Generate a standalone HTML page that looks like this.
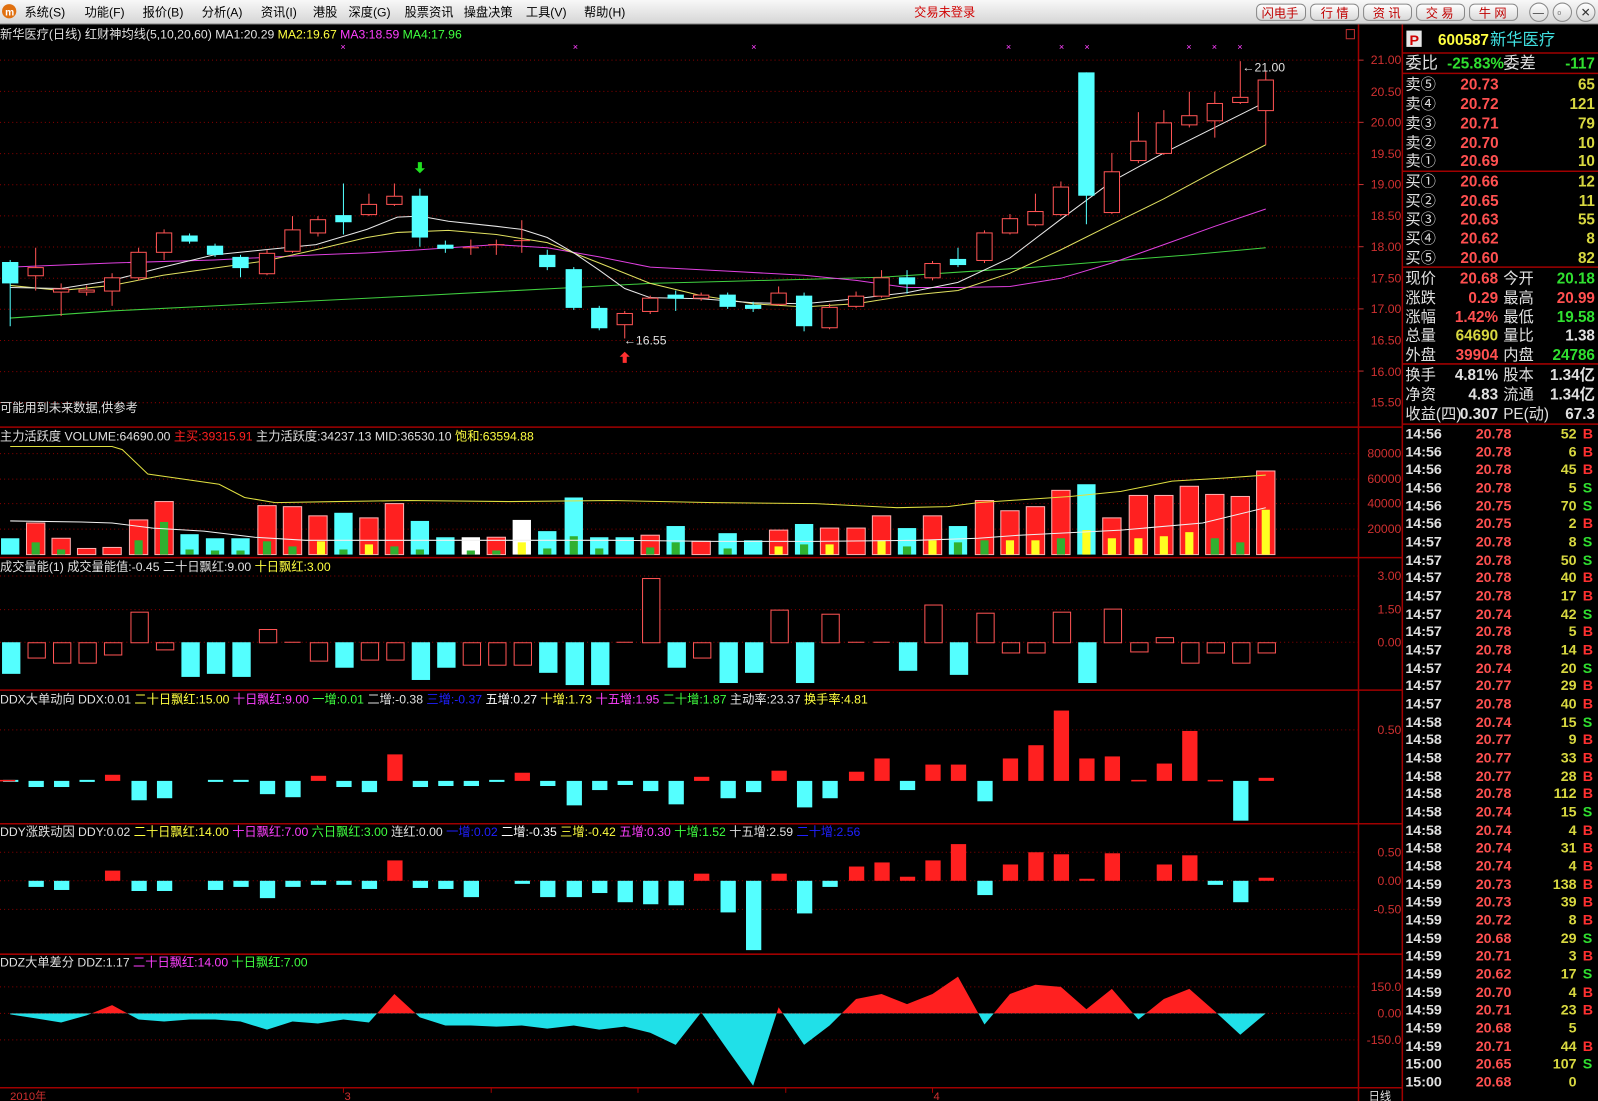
<!DOCTYPE html>
<html><head><meta charset="utf-8"><style>
html,body{margin:0;padding:0;background:#000;overflow:hidden}
svg{display:block}
text{font-family:"Liberation Sans","Noto Sans CJK SC","WenQuanYi Zen Hei",sans-serif}
.r{fill:#000;stroke:#ff5454;stroke-width:1}
.c{fill:#54ffff;stroke:none}
.rf{fill:#ff2020}
.wr{stroke:#ff5454;stroke-width:1}
.wc{stroke:#54ffff;stroke-width:1}
.g{stroke:#8a0000;stroke-width:1;stroke-dasharray:1 3}
.ax{fill:#d03030;font-size:12px}
.sep{stroke:#a00000;stroke-width:1.5}
.t{font-size:12px}
.rp{font-size:15px}
.lab{fill:#e0e0e0}
.pr{fill:#ff5050;font-weight:bold}
.vo{fill:#d8d840;font-weight:bold}
.gr{fill:#30e030;font-weight:bold}
.wh{fill:#e0e0e0;font-weight:bold}
.mn{font-size:12px;fill:#000}
.bt{font-size:12px;fill:#c00000}
</style></head><body>
<svg width="1598" height="1101" viewBox="0 0 1568 1080" preserveAspectRatio="none" xmlns="http://www.w3.org/2000/svg">
<defs>
<linearGradient id="tb" x1="0" y1="0" x2="0" y2="1"><stop offset="0" stop-color="#f8f8f8"/><stop offset="1" stop-color="#d4d4d4"/></linearGradient>
<linearGradient id="bn" x1="0" y1="0" x2="0" y2="1"><stop offset="0" stop-color="#ffffff"/><stop offset="1" stop-color="#d8d8d8"/></linearGradient>
<clipPath id="up"><rect x="0" y="900" width="1333" height="94"/></clipPath>
<clipPath id="dn"><rect x="0" y="994" width="1333" height="80"/></clipPath>
</defs>
<rect width="1568" height="1080" fill="#000"/>
<!-- title bar -->
<rect x="0" y="0" width="1568" height="24" fill="url(#tb)"/>
<line x1="0" y1="23.5" x2="1568" y2="23.5" stroke="#808080"/>
<circle cx="9" cy="11" r="7" fill="#e07010"/><text x="5" y="15" font-size="10" fill="#fff" font-weight="bold">m</text>
<text class="mn" x="24" y="16">系统(S)</text>
<text class="mn" x="83" y="16">功能(F)</text>
<text class="mn" x="140" y="16">报价(B)</text>
<text class="mn" x="198" y="16">分析(A)</text>
<text class="mn" x="256" y="16">资讯(I)</text>
<text class="mn" x="307" y="16">港股</text>
<text class="mn" x="342" y="16">深度(G)</text>
<text class="mn" x="397" y="16">股票资讯</text>
<text class="mn" x="455" y="16">操盘决策</text>
<text class="mn" x="516" y="16">工具(V)</text>
<text class="mn" x="573" y="16">帮助(H)</text>
<text x="897" y="16" font-size="12" fill="#d00000">交易未登录</text>
<g stroke="#888" fill="url(#bn)">
<rect x="1233" y="4" width="48" height="16" rx="5"/><rect x="1286" y="4" width="47" height="16" rx="5"/><rect x="1338" y="4" width="47" height="16" rx="5"/><rect x="1390" y="4" width="47" height="16" rx="5"/><rect x="1442" y="4" width="47" height="16" rx="5"/>
<circle cx="1510" cy="12" r="9"/><circle cx="1533" cy="12" r="9"/><circle cx="1556" cy="12" r="9"/>
</g>
<text class="bt" x="1238" y="17">闪电手</text><text class="bt" x="1296" y="17">行 情</text><text class="bt" x="1347" y="17">资 讯</text><text class="bt" x="1399" y="17">交 易</text><text class="bt" x="1451" y="17">牛 网</text>
<text x="1504" y="16" font-size="11" fill="#333">—</text><text x="1528" y="16" font-size="11" fill="#333">▫</text><text x="1551" y="16" font-size="12" fill="#333">✕</text>

<!-- grid lines -->
<g class="g">
<line x1="0" x2="1333" y1="59" y2="59"/><line x1="0" x2="1333" y1="89.6" y2="89.6"/><line x1="0" x2="1333" y1="120" y2="120"/><line x1="0" x2="1333" y1="150.7" y2="150.7"/><line x1="0" x2="1333" y1="181.2" y2="181.2"/><line x1="0" x2="1333" y1="211.8" y2="211.8"/><line x1="0" x2="1333" y1="242.3" y2="242.3"/><line x1="0" x2="1333" y1="272.9" y2="272.9"/><line x1="0" x2="1333" y1="303.4" y2="303.4"/><line x1="0" x2="1333" y1="334" y2="334"/><line x1="0" x2="1333" y1="364.5" y2="364.5"/><line x1="0" x2="1333" y1="395" y2="395"/>
<line x1="0" x2="1333" y1="445" y2="445"/><line x1="0" x2="1333" y1="470" y2="470"/><line x1="0" x2="1333" y1="494" y2="494"/><line x1="0" x2="1333" y1="519" y2="519"/>
<line x1="0" x2="1333" y1="565" y2="565"/><line x1="0" x2="1333" y1="598" y2="598"/><line x1="0" x2="1333" y1="630" y2="630"/>
<line x1="0" x2="1333" y1="716" y2="716"/>
<line x1="0" x2="1333" y1="836" y2="836"/><line x1="0" x2="1333" y1="864" y2="864"/><line x1="0" x2="1333" y1="892" y2="892"/>
<line x1="0" x2="1333" y1="968" y2="968"/><line x1="0" x2="1333" y1="994" y2="994"/><line x1="0" x2="1333" y1="1020" y2="1020"/>
</g>
<!-- separators -->
<g class="sep">
<line x1="0" x2="1376" y1="419" y2="419"/><line x1="0" x2="1376" y1="547" y2="547"/><line x1="0" x2="1376" y1="677" y2="677"/><line x1="0" x2="1376" y1="808" y2="808"/><line x1="0" x2="1376" y1="936" y2="936"/><line x1="0" x2="1376" y1="1067" y2="1067"/>
<line x1="1333" x2="1333" y1="24" y2="1080"/><line x1="1376" x2="1376" y1="24" y2="1080"/>
</g>
<rect x="1321" y="29" width="8" height="9" fill="none" stroke="#c03030"/>
<!-- axis labels -->
<g class="ax" text-anchor="end">
<text x="1375" y="63">21.00</text><text x="1375" y="94">20.50</text><text x="1375" y="124">20.00</text><text x="1375" y="155">19.50</text><text x="1375" y="185">19.00</text><text x="1375" y="216">18.50</text><text x="1375" y="246">18.00</text><text x="1375" y="277">17.50</text><text x="1375" y="307">17.00</text><text x="1375" y="338">16.50</text><text x="1375" y="369">16.00</text><text x="1375" y="399">15.50</text>
<text x="1375" y="449">80000</text><text x="1375" y="474">60000</text><text x="1375" y="498">40000</text><text x="1375" y="523">20000</text>
<text x="1375" y="569">3.00</text><text x="1375" y="602">1.50</text><text x="1375" y="634">0.00</text>
<text x="1375" y="720">0.50</text>
<text x="1375" y="840">0.50</text><text x="1375" y="868">0.00</text><text x="1375" y="896">-0.50</text>
<text x="1375" y="972">150.0</text><text x="1375" y="998">0.00</text><text x="1375" y="1024">-150.0</text>
</g>
<g stroke="#c03030"><line x1="1333" x2="1338" y1="59" y2="59"/><line x1="1333" x2="1338" y1="120" y2="120"/><line x1="1333" x2="1338" y1="181" y2="181"/><line x1="1333" x2="1338" y1="242" y2="242"/><line x1="1333" x2="1338" y1="303" y2="303"/><line x1="1333" x2="1338" y1="364" y2="364"/></g>

<!-- main legend -->
<text class="t" x="0" y="38"><tspan fill="#e0e0e0">新华医疗(日线) 红财神均线(5,10,20,60) MA1:20.29 </tspan><tspan fill="#ffff40">MA2:19.67 </tspan><tspan fill="#ff40ff">MA3:18.59 </tspan><tspan fill="#40ff40">MA4:17.96</tspan></text>
<g fill="#ff40ff" font-size="9"><text x="334" y="49">×</text><text x="562" y="49">×</text><text x="737" y="49">×</text><text x="987" y="49">×</text><text x="1039" y="49">×</text><text x="1064" y="49">×</text><text x="1164" y="49">×</text><text x="1189" y="49">×</text><text x="1214" y="49">×</text></g>
<text class="t" x="0" y="404" fill="#e0e0e0">可能用到未来数据,供参考</text>

<!-- MAs -->
<polyline fill="none" stroke="#40d040" points="10,312 110,305 210,300 310,295 412,290 487,286 563,282 638,278 714,276 789,274 865,272 940,267 1016,262 1091,256 1167,250 1242,243"/>
<polyline fill="none" stroke="#e040e0" points="10,262 110,258 210,255 310,250 360,248 412,245 487,240 537,243 588,252 638,262 714,266 789,270 840,275 890,282 940,282 991,281 1041,273 1091,258 1142,240 1192,222 1242,205"/>
<polyline fill="none" stroke="#e0e060" points="10,280 60,285 110,280 160,270 210,263 260,256 310,245 360,233 390,228 440,226 487,230 537,238 588,258 638,278 688,290 739,298 789,301 840,298 890,290 940,285 991,268 1041,245 1091,220 1142,195 1192,168 1242,142"/>
<polyline fill="none" stroke="#e8e8e8" points="10,282 60,283 110,275 160,262 210,250 260,245 310,240 360,225 390,213 412,212 440,217 487,222 512,225 537,233 563,248 588,265 613,283 638,292 688,293 739,297 789,298 840,293 890,287 940,277 991,253 1041,215 1091,178 1142,150 1192,125 1242,100"/>

<!-- candles -->
<line class="wc" x1="10" x2="10" y1="255" y2="320"/><rect class="c" x="2" y="257" width="16" height="21"/>
<line class="wr" x1="35" x2="35" y1="243" y2="285"/><rect class="r" x="27.5" y="262.5" width="15" height="8"/>
<line class="wr" x1="60" x2="60" y1="278" y2="310"/><rect class="r" x="52.5" y="283.5" width="15" height="3"/>
<line class="wr" x1="85" x2="85" y1="280" y2="290"/><rect class="r" x="77.5" y="284.5" width="15" height="2"/>
<line class="wr" x1="110" x2="110" y1="268" y2="300"/><rect class="r" x="102.5" y="272.5" width="15" height="13"/>
<line class="wr" x1="136" x2="136" y1="243" y2="275"/><rect class="r" x="128.5" y="247.5" width="15" height="25"/>
<line class="wr" x1="161" x2="161" y1="225" y2="255"/><rect class="r" x="153.5" y="228.5" width="15" height="19"/>
<line class="wc" x1="186" x2="186" y1="229" y2="239"/><rect class="c" x="178" y="231" width="16" height="6"/>
<line class="wc" x1="211" x2="211" y1="239" y2="252"/><rect class="c" x="203" y="241" width="16" height="9"/>
<line class="wc" x1="236" x2="236" y1="250" y2="272"/><rect class="c" x="228" y="252" width="16" height="11"/>
<line class="wr" x1="262" x2="262" y1="245" y2="270"/><rect class="r" x="254.5" y="248.5" width="15" height="20"/>
<line class="wr" x1="287" x2="287" y1="212" y2="248"/><rect class="r" x="279.5" y="225.5" width="15" height="21"/>
<line class="wr" x1="312" x2="312" y1="212" y2="232"/><rect class="r" x="304.5" y="215.5" width="15" height="13"/>
<line class="wc" x1="337" x2="337" y1="180" y2="230"/><rect class="c" x="329" y="211" width="16" height="7"/>
<line class="wr" x1="362" x2="362" y1="190" y2="212"/><rect class="r" x="354.5" y="200.5" width="15" height="10"/>
<line class="wr" x1="387" x2="387" y1="180" y2="202"/><rect class="r" x="379.5" y="192.5" width="15" height="8"/>
<line class="wc" x1="412" x2="412" y1="185" y2="242"/><rect class="c" x="404" y="192" width="16" height="41"/>
<line class="wc" x1="437" x2="437" y1="236" y2="248"/><rect class="c" x="429" y="240" width="16" height="4"/>
<line class="wr" x1="462" x2="462" y1="235" y2="250"/><line class="wr" x1="454" x2="470" y1="243" y2="243"/>
<line class="wr" x1="487" x2="487" y1="235" y2="250"/><line class="wr" x1="479" x2="495" y1="240" y2="240"/>
<line class="wr" x1="512" x2="512" y1="216" y2="248"/><line class="wr" x1="504" x2="520" y1="236" y2="236"/>
<line class="wc" x1="537" x2="537" y1="245" y2="265"/><rect class="c" x="529" y="250" width="16" height="12"/>
<line class="wc" x1="563" x2="563" y1="262" y2="304"/><rect class="c" x="555" y="264" width="16" height="38"/>
<line class="wc" x1="588" x2="588" y1="300" y2="324"/><rect class="c" x="580" y="302" width="16" height="20"/>
<line class="wr" x1="613" x2="613" y1="305" y2="332"/><rect class="r" x="605.5" y="307.5" width="15" height="11"/>
<line class="wr" x1="638" x2="638" y1="290" y2="308"/><rect class="r" x="630.5" y="292.5" width="15" height="13"/>
<line class="wc" x1="663" x2="663" y1="285" y2="305"/><rect class="c" x="655" y="289" width="16" height="4"/>
<line class="wr" x1="688" x2="688" y1="287" y2="295"/><rect class="r" x="680.5" y="289.5" width="15" height="3"/>
<line class="wc" x1="714" x2="714" y1="287" y2="303"/><rect class="c" x="706" y="289" width="16" height="12"/>
<line class="wc" x1="739" x2="739" y1="296" y2="306"/><rect class="c" x="731" y="299" width="16" height="4"/>
<line class="wr" x1="764" x2="764" y1="281" y2="300"/><rect class="r" x="756.5" y="287.5" width="15" height="11"/>
<line class="wc" x1="789" x2="789" y1="287" y2="325"/><rect class="c" x="781" y="290" width="16" height="30"/>
<line class="wr" x1="814" x2="814" y1="298" y2="323"/><rect class="r" x="806.5" y="301.5" width="15" height="20"/>
<line class="wr" x1="840" x2="840" y1="286" y2="302"/><rect class="r" x="832.5" y="290.5" width="15" height="10"/>
<line class="wr" x1="865" x2="865" y1="265" y2="292"/><rect class="r" x="857.5" y="272.5" width="15" height="18"/>
<line class="wc" x1="890" x2="890" y1="265" y2="288"/><rect class="c" x="882" y="272" width="16" height="7"/>
<line class="wr" x1="915" x2="915" y1="256" y2="275"/><rect class="r" x="907.5" y="258.5" width="15" height="14"/>
<line class="wc" x1="940" x2="940" y1="243" y2="262"/><rect class="c" x="932" y="254" width="16" height="6"/>
<line class="wr" x1="966" x2="966" y1="226" y2="258"/><rect class="r" x="958.5" y="228.5" width="15" height="27"/>
<line class="wr" x1="991" x2="991" y1="210" y2="230"/><rect class="r" x="983.5" y="214.5" width="15" height="14"/>
<line class="wr" x1="1016" x2="1016" y1="190" y2="222"/><rect class="r" x="1008.5" y="207.5" width="15" height="13"/>
<line class="wr" x1="1041" x2="1041" y1="178" y2="212"/><rect class="r" x="1033.5" y="183.5" width="15" height="27"/>
<line class="wc" x1="1066" x2="1066" y1="71" y2="220"/><rect class="c" x="1058" y="71" width="16" height="121"/>
<line class="wr" x1="1091" x2="1091" y1="150" y2="210"/><rect class="r" x="1083.5" y="168.5" width="15" height="40"/>
<line class="wr" x1="1117" x2="1117" y1="110" y2="160"/><rect class="r" x="1109.5" y="138.5" width="15" height="19"/>
<line class="wr" x1="1142" x2="1142" y1="108" y2="152"/><rect class="r" x="1134.5" y="120.5" width="15" height="30"/>
<line class="wr" x1="1167" x2="1167" y1="90" y2="125"/><rect class="r" x="1159.5" y="113.5" width="15" height="9"/>
<line class="wr" x1="1192" x2="1192" y1="90" y2="135"/><rect class="r" x="1184.5" y="101.5" width="15" height="17"/>
<line class="wr" x1="1217" x2="1217" y1="60" y2="102"/><rect class="r" x="1209.5" y="95.5" width="15" height="5"/>
<line class="wr" x1="1242" x2="1242" y1="70" y2="142"/><rect class="r" x="1234.5" y="78.5" width="15" height="30"/>
<text x="1219" y="70" font-size="12" fill="#e0e0e0">←21.00</text>
<text x="612" y="338" font-size="12" fill="#e0e0e0">←16.55</text>
<path d="M412 170 l-5 -5 h3 v-6 h4 v6 h3 z" fill="#20e020"/>
<path d="M613 345 l-5 5 h3 v6 h4 v-6 h3 z" fill="#ff3030"/>

<!-- volume panel -->
<text class="t" x="0" y="432"><tspan fill="#e0e0e0">主力活跃度 VOLUME:64690.00 </tspan><tspan fill="#ff2020"> 主买:39315.91 </tspan><tspan fill="#e0e0e0">  主力活跃度:34237.13    MID:36530.10 </tspan><tspan fill="#ffff40">饱和:63594.88</tspan></text>
<g>
<rect x="1" y="528" width="18" height="16" fill="#54ffff"/>
<rect x="26" y="513" width="18" height="31" fill="#ff2020" stroke="#ffb0b0"/>
<rect x="51" y="528" width="18" height="16" fill="#ff2020" stroke="#ffb0b0"/>
<rect x="76" y="538" width="18" height="6" fill="#ff2020" stroke="#ffb0b0"/>
<rect x="101" y="537" width="18" height="7" fill="#ff2020" stroke="#ffb0b0"/>
<rect x="127" y="510" width="18" height="34" fill="#ff2020" stroke="#ffb0b0"/>
<rect x="152" y="492" width="18" height="52" fill="#ff2020" stroke="#ffb0b0"/>
<rect x="177" y="524" width="18" height="20" fill="#54ffff"/>
<rect x="202" y="528" width="18" height="16" fill="#54ffff"/>
<rect x="227" y="528" width="18" height="16" fill="#54ffff"/>
<rect x="253" y="496" width="18" height="48" fill="#ff2020" stroke="#ffb0b0"/>
<rect x="278" y="497" width="18" height="47" fill="#ff2020" stroke="#ffb0b0"/>
<rect x="303" y="506" width="18" height="38" fill="#ff2020" stroke="#ffb0b0"/>
<rect x="328" y="503" width="18" height="41" fill="#54ffff"/>
<rect x="353" y="508" width="18" height="36" fill="#ff2020" stroke="#ffb0b0"/>
<rect x="378" y="494" width="18" height="50" fill="#ff2020" stroke="#ffb0b0"/>
<rect x="403" y="511" width="18" height="33" fill="#54ffff"/>
<rect x="428" y="527" width="18" height="17" fill="#54ffff"/>
<rect x="453" y="527" width="18" height="17" fill="#ffffff"/>
<rect x="478" y="527" width="18" height="17" fill="#ff2020" stroke="#ffb0b0"/>
<rect x="503" y="510" width="18" height="34" fill="#ffffff"/>
<rect x="528" y="521" width="18" height="23" fill="#54ffff"/>
<rect x="554" y="488" width="18" height="56" fill="#54ffff"/>
<rect x="579" y="527" width="18" height="17" fill="#54ffff"/>
<rect x="604" y="527" width="18" height="17" fill="#54ffff"/>
<rect x="629" y="525" width="18" height="19" fill="#ff2020" stroke="#ffb0b0"/>
<rect x="654" y="516" width="18" height="28" fill="#54ffff"/>
<rect x="679" y="531" width="18" height="13" fill="#ff2020" stroke="#ffb0b0"/>
<rect x="705" y="523" width="18" height="21" fill="#54ffff"/>
<rect x="730" y="530" width="18" height="14" fill="#54ffff"/>
<rect x="755" y="520" width="18" height="24" fill="#ff2020" stroke="#ffb0b0"/>
<rect x="780" y="514" width="18" height="30" fill="#54ffff"/>
<rect x="805" y="518" width="18" height="26" fill="#ff2020" stroke="#ffb0b0"/>
<rect x="831" y="518" width="18" height="26" fill="#ff2020" stroke="#ffb0b0"/>
<rect x="856" y="506" width="18" height="38" fill="#ff2020" stroke="#ffb0b0"/>
<rect x="881" y="518" width="18" height="26" fill="#54ffff"/>
<rect x="906" y="506" width="18" height="38" fill="#ff2020" stroke="#ffb0b0"/>
<rect x="931" y="516" width="18" height="28" fill="#54ffff"/>
<rect x="957" y="491" width="18" height="53" fill="#ff2020" stroke="#ffb0b0"/>
<rect x="982" y="501" width="18" height="43" fill="#ff2020" stroke="#ffb0b0"/>
<rect x="1007" y="497" width="18" height="47" fill="#ff2020" stroke="#ffb0b0"/>
<rect x="1032" y="481" width="18" height="63" fill="#ff2020" stroke="#ffb0b0"/>
<rect x="1057" y="475" width="18" height="69" fill="#54ffff"/>
<rect x="1082" y="508" width="18" height="36" fill="#ff2020" stroke="#ffb0b0"/>
<rect x="1108" y="486" width="18" height="58" fill="#ff2020" stroke="#ffb0b0"/>
<rect x="1133" y="486" width="18" height="58" fill="#ff2020" stroke="#ffb0b0"/>
<rect x="1158" y="477" width="18" height="67" fill="#ff2020" stroke="#ffb0b0"/>
<rect x="1183" y="485" width="18" height="59" fill="#ff2020" stroke="#ffb0b0"/>
<rect x="1208" y="487" width="18" height="57" fill="#ff2020" stroke="#ffb0b0"/>
<rect x="1233" y="462" width="18" height="82" fill="#ff2020" stroke="#ffb0b0"/>
</g>
<g fill="#30b030">
<rect x="31" y="532" width="8" height="12"/><rect x="56" y="539" width="8" height="5"/><rect x="132" y="530" width="8" height="14"/><rect x="157" y="512" width="8" height="32"/><rect x="182" y="539" width="8" height="5"/><rect x="207" y="540" width="8" height="4"/><rect x="232" y="540" width="8" height="4"/><rect x="258" y="531" width="8" height="13"/><rect x="283" y="536" width="8" height="8"/><rect x="333" y="539" width="8" height="5"/><rect x="383" y="536" width="8" height="8"/><rect x="408" y="539" width="8" height="5"/><rect x="458" y="540" width="8" height="4"/><rect x="483" y="540" width="8" height="4"/><rect x="533" y="538" width="8" height="6"/><rect x="559" y="526" width="8" height="18"/><rect x="584" y="538" width="8" height="6"/><rect x="634" y="537" width="8" height="7"/><rect x="659" y="532" width="8" height="12"/><rect x="710" y="538" width="8" height="6"/><rect x="785" y="534" width="8" height="10"/><rect x="886" y="536" width="8" height="8"/><rect x="936" y="532" width="8" height="12"/><rect x="962" y="530" width="8" height="14"/><rect x="1188" y="528" width="8" height="16"/><rect x="1213" y="532" width="8" height="12"/><rect x="1037" y="528" width="8" height="16"/>
</g>
<g fill="#ffff20">
<rect x="508" y="532" width="8" height="12"/><rect x="311" y="531" width="8" height="13"/><rect x="358" y="534" width="8" height="10"/><rect x="760" y="536" width="8" height="8"/><rect x="810" y="534" width="8" height="10"/><rect x="861" y="530" width="8" height="14"/><rect x="911" y="530" width="8" height="14"/><rect x="987" y="530" width="8" height="14"/><rect x="1012" y="530" width="8" height="14"/><rect x="1062" y="520" width="8" height="24"/><rect x="1087" y="528" width="8" height="16"/><rect x="1113" y="528" width="8" height="16"/><rect x="1138" y="526" width="8" height="18"/><rect x="1163" y="522" width="8" height="22"/><rect x="1238" y="500" width="8" height="44"/>
</g>
<polyline fill="none" stroke="#e0e040" points="10,438 110,438 120,441 145,465 215,475 240,488 270,493 330,492 400,491 500,492 600,491 700,493 800,494 880,498 930,497 960,493 1050,487 1100,482 1150,472 1200,469 1242,466"/>
<polyline fill="none" stroke="#f0f0f0" points="10,511 80,512 110,513 150,518 200,521 250,527 300,530 400,530 500,530 600,530 700,531 800,531 900,530 960,528 1000,525 1100,520 1180,513 1242,498"/>

<!-- panel 3 -->
<text class="t" x="0" y="560"><tspan fill="#e0e0e0">成交量能(1) 成交量能值:-0.45 二十日飘红:9.00 </tspan><tspan fill="#ffff40">十日飘红:3.00</tspan></text>
<g class="c">
<rect x="2" y="630" width="18" height="31"/><rect x="178" y="630" width="18" height="34"/><rect x="203" y="630" width="18" height="31"/><rect x="228" y="630" width="18" height="34"/><rect x="329" y="630" width="18" height="25"/><rect x="404" y="630" width="18" height="37"/><rect x="429" y="630" width="18" height="25"/><rect x="529" y="630" width="18" height="30"/><rect x="555" y="630" width="18" height="42"/><rect x="580" y="630" width="18" height="42"/><rect x="655" y="630" width="18" height="25"/><rect x="706" y="630" width="18" height="40"/><rect x="731" y="630" width="18" height="30"/><rect x="781" y="630" width="18" height="40"/><rect x="882" y="630" width="18" height="28"/><rect x="932" y="630" width="18" height="32"/><rect x="1058" y="630" width="18" height="40"/>
</g>
<g class="r">
<rect x="27.5" y="630.5" width="17" height="15"/><rect x="52.5" y="630.5" width="17" height="20"/><rect x="77.5" y="630.5" width="17" height="20"/><rect x="102.5" y="630.5" width="17" height="12"/><rect x="128.5" y="600.5" width="17" height="30"/><rect x="153.5" y="630.5" width="17" height="7"/><rect x="254.5" y="617.5" width="17" height="13"/><rect x="304.5" y="630.5" width="17" height="18"/><rect x="354.5" y="630.5" width="17" height="17"/><rect x="379.5" y="630.5" width="17" height="17"/><rect x="454.5" y="630.5" width="17" height="22"/><rect x="479.5" y="630.5" width="17" height="22"/><rect x="504.5" y="630.5" width="17" height="22"/><rect x="630.5" y="567.5" width="17" height="63"/><rect x="680.5" y="630.5" width="17" height="15"/><rect x="756.5" y="598.5" width="17" height="32"/><rect x="806.5" y="602.5" width="17" height="28"/><rect x="907.5" y="593.5" width="17" height="37"/><rect x="958.5" y="601.5" width="17" height="29"/><rect x="983.5" y="630.5" width="17" height="10"/><rect x="1008.5" y="630.5" width="17" height="10"/><rect x="1033.5" y="600.5" width="17" height="30"/><rect x="1083.5" y="597.5" width="17" height="33"/><rect x="1109.5" y="630.5" width="17" height="9"/><rect x="1134.5" y="625.5" width="17" height="5"/><rect x="1159.5" y="630.5" width="17" height="20"/><rect x="1184.5" y="630.5" width="17" height="10"/><rect x="1209.5" y="630.5" width="17" height="20"/><rect x="1234.5" y="630.5" width="17" height="10"/>
</g>
<g stroke="#ff5454"><line x1="279" x2="295" y1="630" y2="630"/><line x1="605" x2="621" y1="630" y2="630"/><line x1="832" x2="848" y1="630" y2="630"/><line x1="857" x2="873" y1="630" y2="630"/></g>

<!-- DDX -->
<text class="t" x="0" y="690"><tspan fill="#e0e0e0">DDX大单动向 DDX:0.01    </tspan><tspan fill="#ffff40">二十日飘红:15.00 </tspan><tspan fill="#ff40ff">十日飘红:9.00 </tspan><tspan fill="#40ff40">一增:0.01 </tspan><tspan fill="#e0e0e0">二增:-0.38 </tspan><tspan fill="#2020ff">三增:-0.37 </tspan><tspan fill="#ffffff">五增:0.27 </tspan><tspan fill="#ffff40">十增:1.73 </tspan><tspan fill="#ff40ff">十五增:1.95 </tspan><tspan fill="#40ff40">二十增:1.87 </tspan><tspan fill="#e0e0e0">主动率:23.37 </tspan><tspan fill="#ffff40">换手率:4.81</tspan></text>
<g class="c">
<rect x="28" y="766" width="15" height="6"/><rect x="53" y="766" width="15" height="6"/><rect x="129" y="766" width="15" height="19"/><rect x="154" y="766" width="15" height="17"/><rect x="255" y="766" width="15" height="13"/><rect x="280" y="766" width="15" height="16"/><rect x="330" y="766" width="15" height="6"/><rect x="355" y="766" width="15" height="11"/><rect x="405" y="766" width="15" height="6"/><rect x="430" y="766" width="15" height="5"/><rect x="455" y="766" width="15" height="5"/><rect x="530" y="766" width="15" height="5"/><rect x="556" y="766" width="15" height="24"/><rect x="581" y="766" width="15" height="9"/><rect x="606" y="766" width="15" height="4"/><rect x="631" y="766" width="15" height="10"/><rect x="656" y="766" width="15" height="23"/><rect x="707" y="766" width="15" height="17"/><rect x="732" y="766" width="15" height="11"/><rect x="782" y="766" width="15" height="26"/><rect x="807" y="766" width="15" height="17"/><rect x="883" y="766" width="15" height="9"/><rect x="959" y="766" width="15" height="20"/><rect x="1210" y="766" width="15" height="39"/>
<rect x="3" y="765" width="15" height="2"/><rect x="78" y="765" width="15" height="2"/><rect x="204" y="765" width="15" height="2"/><rect x="229" y="765" width="15" height="2"/><rect x="480" y="765" width="15" height="2"/>
</g>
<g class="rf">
<rect x="103" y="760" width="15" height="6"/><rect x="305" y="761" width="15" height="5"/><rect x="380" y="740" width="15" height="26"/><rect x="505" y="758" width="15" height="8"/><rect x="681" y="762" width="15" height="4"/><rect x="757" y="756" width="15" height="10"/><rect x="833" y="757" width="15" height="9"/><rect x="858" y="744" width="15" height="22"/><rect x="908" y="750" width="15" height="16"/><rect x="933" y="750" width="15" height="16"/><rect x="984" y="744" width="15" height="22"/><rect x="1009" y="731" width="15" height="35"/><rect x="1034" y="697" width="15" height="69"/><rect x="1059" y="744" width="15" height="22"/><rect x="1084" y="742" width="15" height="24"/><rect x="1135" y="749" width="15" height="17"/><rect x="1160" y="717" width="15" height="49"/><rect x="1235" y="763" width="15" height="3"/>
<rect x="0" y="765" width="15" height="1.5"/><rect x="1110" y="765" width="15" height="1.5"/><rect x="1185" y="765" width="15" height="1.5"/>
</g>

<!-- DDY -->
<text class="t" x="0" y="820"><tspan fill="#e0e0e0">DDY涨跌动因 DDY:0.02    </tspan><tspan fill="#ffff40">二十日飘红:14.00 </tspan><tspan fill="#ff40ff">十日飘红:7.00 </tspan><tspan fill="#40ff40">六日飘红:3.00 </tspan><tspan fill="#e0e0e0">连红:0.00 </tspan><tspan fill="#2020ff">一增:0.02 </tspan><tspan fill="#ffffff">二增:-0.35 </tspan><tspan fill="#ffff40">三增:-0.42 </tspan><tspan fill="#ff40ff">五增:0.30 </tspan><tspan fill="#40ff40">十增:1.52 </tspan><tspan fill="#e0e0e0">十五增:2.59 </tspan><tspan fill="#2020ff">二十增:2.56</tspan></text>
<g class="c">
<rect x="28" y="864" width="15" height="6"/><rect x="53" y="864" width="15" height="9"/><rect x="129" y="864" width="15" height="10"/><rect x="154" y="864" width="15" height="10"/><rect x="204" y="864" width="15" height="9"/><rect x="229" y="864" width="15" height="6"/><rect x="255" y="864" width="15" height="17"/><rect x="280" y="864" width="15" height="6"/><rect x="305" y="864" width="15" height="4"/><rect x="330" y="864" width="15" height="4"/><rect x="355" y="864" width="15" height="8"/><rect x="405" y="864" width="15" height="7"/><rect x="430" y="864" width="15" height="8"/><rect x="455" y="864" width="15" height="16"/><rect x="505" y="864" width="15" height="3"/><rect x="530" y="864" width="15" height="16"/><rect x="556" y="864" width="15" height="16"/><rect x="581" y="864" width="15" height="12"/><rect x="606" y="864" width="15" height="21"/><rect x="631" y="864" width="15" height="23"/><rect x="656" y="864" width="15" height="24"/><rect x="707" y="864" width="15" height="31"/><rect x="732" y="864" width="15" height="68"/><rect x="782" y="864" width="15" height="32"/><rect x="807" y="864" width="15" height="6"/><rect x="959" y="864" width="15" height="14"/><rect x="1185" y="864" width="15" height="4"/><rect x="1210" y="864" width="15" height="21"/>
</g>
<g class="rf">
<rect x="103" y="854" width="15" height="10"/><rect x="380" y="844" width="15" height="20"/><rect x="681" y="857" width="15" height="7"/><rect x="757" y="857" width="15" height="7"/><rect x="833" y="850" width="15" height="14"/><rect x="858" y="846" width="15" height="18"/><rect x="883" y="860" width="15" height="4"/><rect x="908" y="844" width="15" height="20"/><rect x="933" y="828" width="15" height="36"/><rect x="984" y="848" width="15" height="16"/><rect x="1009" y="836" width="15" height="28"/><rect x="1034" y="838" width="15" height="26"/><rect x="1059" y="862" width="15" height="2"/><rect x="1084" y="837" width="15" height="27"/><rect x="1135" y="848" width="15" height="16"/><rect x="1160" y="839" width="15" height="25"/><rect x="1235" y="861" width="15" height="3"/>
</g>

<!-- DDZ -->
<text class="t" x="0" y="948"><tspan fill="#e0e0e0">DDZ大单差分 DDZ:1.17   </tspan><tspan fill="#ff40ff">二十日飘红:14.00 </tspan><tspan fill="#40ff40">十日飘红:7.00</tspan></text>
<g>
<polygon clip-path="url(#up)" fill="#ff2020" points="10,994 10,995 35,999 60,1003 85,996 110,986 136,1000 161,1002 186,1000 211,1000 236,1002 262,1010 287,1002 312,1004 337,1000 362,1003 387,975 412,998 437,1006 462,1006 487,1007 512,1006 537,1009 563,1006 588,1010 613,1007 638,1013 663,1025 688,993 714,1030 739,1065 764,988 789,1025 814,1006 840,980 865,975 890,985 915,975 940,958 966,1005 991,975 1016,966 1041,968 1066,990 1091,970 1117,1000 1142,980 1167,970 1192,992 1217,1015 1242,994 1242,994"/>
<polygon clip-path="url(#dn)" fill="#20e0e8" points="10,994 10,995 35,999 60,1003 85,996 110,986 136,1000 161,1002 186,1000 211,1000 236,1002 262,1010 287,1002 312,1004 337,1000 362,1003 387,975 412,998 437,1006 462,1006 487,1007 512,1006 537,1009 563,1006 588,1010 613,1007 638,1013 663,1025 688,993 714,1030 739,1065 764,988 789,1025 814,1006 840,980 865,975 890,985 915,975 940,958 966,1005 991,975 1016,966 1041,968 1066,990 1091,970 1117,1000 1142,980 1167,970 1192,992 1217,1015 1242,994 1242,994"/>
</g>

<!-- bottom axis -->
<text x="10" y="1079" font-size="11" fill="#d03030">2010年</text>
<text x="338" y="1079" font-size="11" fill="#d03030">3</text>
<text x="916" y="1079" font-size="11" fill="#d03030">4</text>
<text x="1343" y="1079" font-size="11" fill="#e0e0e0">日线</text>
<g stroke="#a00000"><line x1="337" x2="337" y1="1067" y2="1072"/><line x1="482" x2="482" y1="1067" y2="1072"/><line x1="626" x2="626" y1="1067" y2="1072"/><line x1="771" x2="771" y1="1067" y2="1072"/><line x1="915" x2="915" y1="1067" y2="1072"/></g>

<!-- right panel -->
<rect x="1380" y="30" width="15" height="16" fill="#e8e8e8"/><text x="1383" y="44" font-size="14" font-weight="bold" fill="#d00000">P</text>
<text x="1411" y="44" font-size="15" font-weight="bold" fill="#ffff40">600587</text>
<text x="1462" y="44" font-size="16" fill="#40e0e0">新华医疗</text>
<g stroke="#a00000" stroke-width="1.5"><line x1="1376" x2="1568" y1="52" y2="52"/><line x1="1376" x2="1568" y1="72" y2="72"/><line x1="1376" x2="1568" y1="168" y2="168"/><line x1="1376" x2="1568" y1="262" y2="262"/><line x1="1376" x2="1568" y1="357" y2="357"/><line x1="1376" x2="1568" y1="416" y2="416"/></g>
<g class="rp">
<text class="lab" x="1379" y="67" font-size="16">委比</text><text class="gr" x="1420" y="67">-25.83%</text><text class="lab" x="1475" y="67" font-size="16">委差</text><text class="gr" x="1565" y="67" text-anchor="end">-117</text>
<text class="lab" x="1379" y="88">卖⑤</text><text class="pr" x="1433" y="88">20.73</text><text class="vo" x="1565" y="88" text-anchor="end">65</text>
<text class="lab" x="1379" y="107">卖④</text><text class="pr" x="1433" y="107">20.72</text><text class="vo" x="1565" y="107" text-anchor="end">121</text>
<text class="lab" x="1379" y="126">卖③</text><text class="pr" x="1433" y="126">20.71</text><text class="vo" x="1565" y="126" text-anchor="end">79</text>
<text class="lab" x="1379" y="145">卖②</text><text class="pr" x="1433" y="145">20.70</text><text class="vo" x="1565" y="145" text-anchor="end">10</text>
<text class="lab" x="1379" y="163">卖①</text><text class="pr" x="1433" y="163">20.69</text><text class="vo" x="1565" y="163" text-anchor="end">10</text>
<text class="lab" x="1379" y="183">买①</text><text class="pr" x="1433" y="183">20.66</text><text class="vo" x="1565" y="183" text-anchor="end">12</text>
<text class="lab" x="1379" y="202">买②</text><text class="pr" x="1433" y="202">20.65</text><text class="vo" x="1565" y="202" text-anchor="end">11</text>
<text class="lab" x="1379" y="220">买③</text><text class="pr" x="1433" y="220">20.63</text><text class="vo" x="1565" y="220" text-anchor="end">55</text>
<text class="lab" x="1379" y="239">买④</text><text class="pr" x="1433" y="239">20.62</text><text class="vo" x="1565" y="239" text-anchor="end">8</text>
<text class="lab" x="1379" y="258">买⑤</text><text class="pr" x="1433" y="258">20.60</text><text class="vo" x="1565" y="258" text-anchor="end">82</text>
<text class="lab" x="1379" y="278">现价</text><text class="pr" x="1470" y="278" text-anchor="end">20.68</text><text class="lab" x="1475" y="278">今开</text><text class="gr" x="1565" y="278" text-anchor="end">20.18</text>
<text class="lab" x="1379" y="297">涨跌</text><text class="pr" x="1470" y="297" text-anchor="end">0.29</text><text class="lab" x="1475" y="297">最高</text><text class="pr" x="1565" y="297" text-anchor="end">20.99</text>
<text class="lab" x="1379" y="316">涨幅</text><text class="pr" x="1470" y="316" text-anchor="end">1.42%</text><text class="lab" x="1475" y="316">最低</text><text class="gr" x="1565" y="316" text-anchor="end">19.58</text>
<text class="lab" x="1379" y="334">总量</text><text class="vo" x="1470" y="334" text-anchor="end">64690</text><text class="lab" x="1475" y="334">量比</text><text class="wh" x="1565" y="334" text-anchor="end">1.38</text>
<text class="lab" x="1379" y="353">外盘</text><text class="pr" x="1470" y="353" text-anchor="end">39904</text><text class="lab" x="1475" y="353">内盘</text><text class="gr" x="1565" y="353" text-anchor="end">24786</text>
<text class="lab" x="1379" y="373">换手</text><text class="wh" x="1470" y="373" text-anchor="end">4.81%</text><text class="lab" x="1475" y="373">股本</text><text class="wh" x="1565" y="373" text-anchor="end">1.34亿</text>
<text class="lab" x="1379" y="392">净资</text><text class="wh" x="1470" y="392" text-anchor="end">4.83</text><text class="lab" x="1475" y="392">流通</text><text class="wh" x="1565" y="392" text-anchor="end">1.34亿</text>
<text class="lab" x="1379" y="411">收益(四)</text><text class="wh" x="1470" y="411" text-anchor="end">0.307</text><text class="lab" x="1475" y="411">PE(动)</text><text class="wh" x="1565" y="411" text-anchor="end">67.3</text>
</g>
<!-- ticks -->
<g font-size="14" font-weight="bold">
<g fill="#e0e0e0">
<text x="1379" y="430">14:56</text><text x="1379" y="448">14:56</text><text x="1379" y="465">14:56</text><text x="1379" y="483">14:56</text><text x="1379" y="501">14:56</text><text x="1379" y="518">14:56</text>
<text x="1379" y="536">14:57</text><text x="1379" y="554">14:57</text><text x="1379" y="571">14:57</text><text x="1379" y="589">14:57</text><text x="1379" y="607">14:57</text><text x="1379" y="624">14:57</text><text x="1379" y="642">14:57</text><text x="1379" y="660">14:57</text><text x="1379" y="677">14:57</text><text x="1379" y="695">14:57</text>
<text x="1379" y="713">14:58</text><text x="1379" y="730">14:58</text><text x="1379" y="748">14:58</text><text x="1379" y="766">14:58</text><text x="1379" y="783">14:58</text><text x="1379" y="801">14:58</text><text x="1379" y="819">14:58</text><text x="1379" y="836">14:58</text><text x="1379" y="854">14:58</text>
<text x="1379" y="872">14:59</text><text x="1379" y="889">14:59</text><text x="1379" y="907">14:59</text><text x="1379" y="925">14:59</text><text x="1379" y="942">14:59</text><text x="1379" y="960">14:59</text><text x="1379" y="978">14:59</text><text x="1379" y="995">14:59</text><text x="1379" y="1013">14:59</text><text x="1379" y="1031">14:59</text>
<text x="1379" y="1048">15:00</text><text x="1379" y="1066">15:00</text>
</g>
<g fill="#ff5050">
<text x="1448" y="430">20.78</text><text x="1448" y="448">20.78</text><text x="1448" y="465">20.78</text><text x="1448" y="483">20.78</text><text x="1448" y="501">20.75</text><text x="1448" y="518">20.75</text><text x="1448" y="536">20.78</text><text x="1448" y="554">20.78</text><text x="1448" y="571">20.78</text><text x="1448" y="589">20.78</text><text x="1448" y="607">20.74</text><text x="1448" y="624">20.78</text><text x="1448" y="642">20.78</text><text x="1448" y="660">20.74</text><text x="1448" y="677">20.77</text><text x="1448" y="695">20.78</text><text x="1448" y="713">20.74</text><text x="1448" y="730">20.77</text><text x="1448" y="748">20.77</text><text x="1448" y="766">20.77</text><text x="1448" y="783">20.78</text><text x="1448" y="801">20.74</text><text x="1448" y="819">20.74</text><text x="1448" y="836">20.74</text><text x="1448" y="854">20.74</text><text x="1448" y="872">20.73</text><text x="1448" y="889">20.73</text><text x="1448" y="907">20.72</text><text x="1448" y="925">20.68</text><text x="1448" y="942">20.71</text><text x="1448" y="960">20.62</text><text x="1448" y="978">20.70</text><text x="1448" y="995">20.71</text><text x="1448" y="1013">20.68</text><text x="1448" y="1031">20.71</text><text x="1448" y="1048">20.65</text><text x="1448" y="1066">20.68</text>
</g>
<g fill="#d8d840" text-anchor="end">
<text x="1547" y="430">52</text><text x="1547" y="448">6</text><text x="1547" y="465">45</text><text x="1547" y="483">5</text><text x="1547" y="501">70</text><text x="1547" y="518">2</text><text x="1547" y="536">8</text><text x="1547" y="554">50</text><text x="1547" y="571">40</text><text x="1547" y="589">17</text><text x="1547" y="607">42</text><text x="1547" y="624">5</text><text x="1547" y="642">14</text><text x="1547" y="660">20</text><text x="1547" y="677">29</text><text x="1547" y="695">40</text><text x="1547" y="713">15</text><text x="1547" y="730">9</text><text x="1547" y="748">33</text><text x="1547" y="766">28</text><text x="1547" y="783">112</text><text x="1547" y="801">15</text><text x="1547" y="819">4</text><text x="1547" y="836">31</text><text x="1547" y="854">4</text><text x="1547" y="872">138</text><text x="1547" y="889">39</text><text x="1547" y="907">8</text><text x="1547" y="925">29</text><text x="1547" y="942">3</text><text x="1547" y="960">17</text><text x="1547" y="978">4</text><text x="1547" y="995">23</text><text x="1547" y="1013">5</text><text x="1547" y="1031">44</text><text x="1547" y="1048">107</text><text x="1547" y="1066">0</text>
</g>
<g>
<text x="1553" y="430" fill="#ff3030">B</text><text x="1553" y="448" fill="#ff3030">B</text><text x="1553" y="465" fill="#ff3030">B</text><text x="1553" y="483" fill="#30e030">S</text><text x="1553" y="501" fill="#30e030">S</text><text x="1553" y="518" fill="#ff3030">B</text><text x="1553" y="536" fill="#30e030">S</text><text x="1553" y="554" fill="#30e030">S</text><text x="1553" y="571" fill="#ff3030">B</text><text x="1553" y="589" fill="#ff3030">B</text><text x="1553" y="607" fill="#30e030">S</text><text x="1553" y="624" fill="#ff3030">B</text><text x="1553" y="642" fill="#ff3030">B</text><text x="1553" y="660" fill="#30e030">S</text><text x="1553" y="677" fill="#ff3030">B</text><text x="1553" y="695" fill="#ff3030">B</text><text x="1553" y="713" fill="#30e030">S</text><text x="1553" y="730" fill="#ff3030">B</text><text x="1553" y="748" fill="#ff3030">B</text><text x="1553" y="766" fill="#ff3030">B</text><text x="1553" y="783" fill="#ff3030">B</text><text x="1553" y="801" fill="#30e030">S</text><text x="1553" y="819" fill="#ff3030">B</text><text x="1553" y="836" fill="#ff3030">B</text><text x="1553" y="854" fill="#ff3030">B</text><text x="1553" y="872" fill="#ff3030">B</text><text x="1553" y="889" fill="#ff3030">B</text><text x="1553" y="907" fill="#ff3030">B</text><text x="1553" y="925" fill="#30e030">S</text><text x="1553" y="942" fill="#ff3030">B</text><text x="1553" y="960" fill="#30e030">S</text><text x="1553" y="978" fill="#ff3030">B</text><text x="1553" y="995" fill="#ff3030">B</text><text x="1553" y="1031" fill="#ff3030">B</text><text x="1553" y="1048" fill="#30e030">S</text>
</g>
</g>
</svg>
</body></html>
